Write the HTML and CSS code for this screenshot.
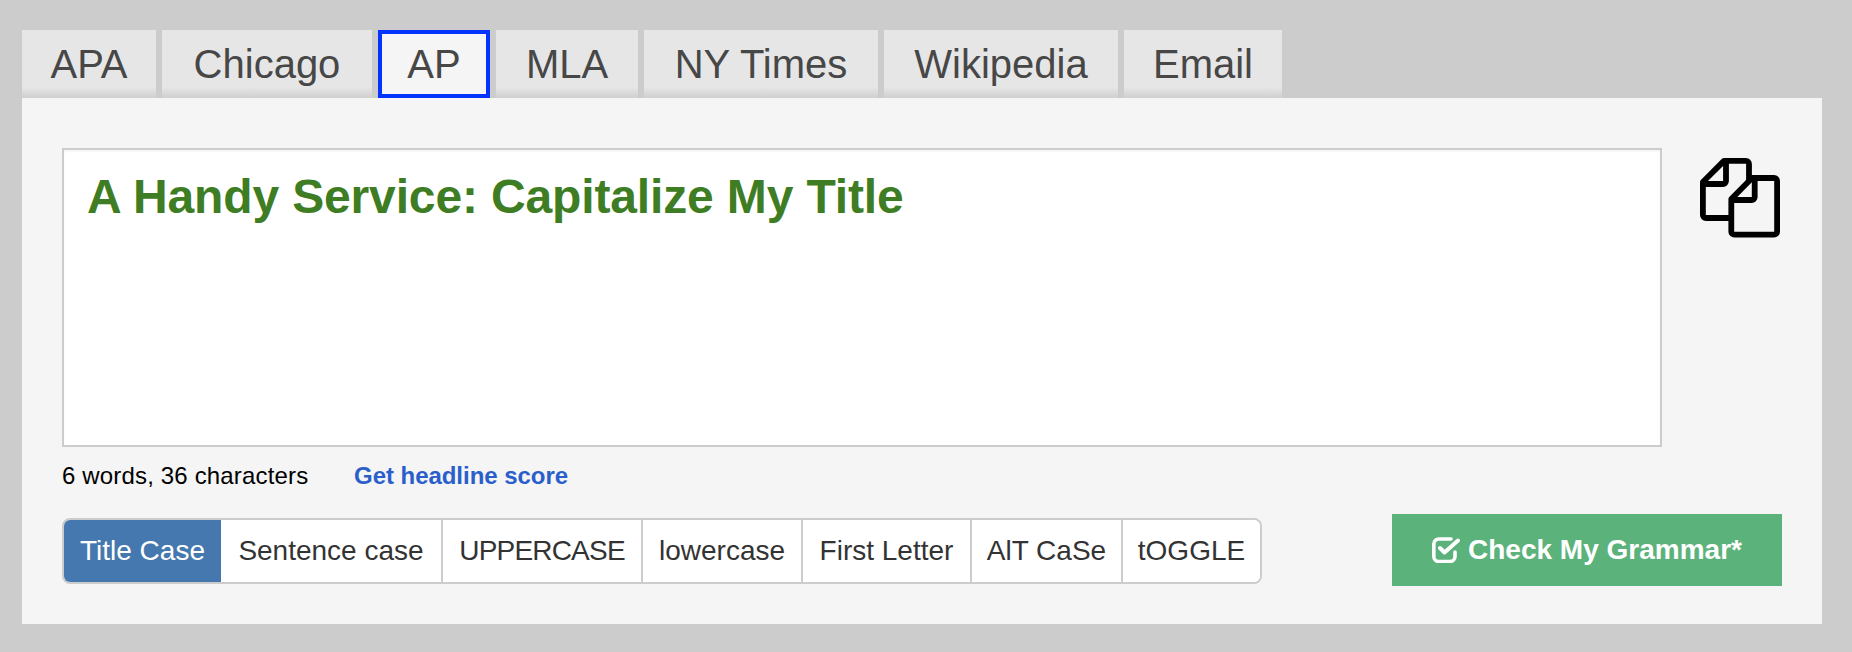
FILE: index.html
```html
<!DOCTYPE html>
<html lang="en">
<head>
<meta charset="utf-8">
<title>Capitalize My Title</title>
<link rel="stylesheet" href="styles.css">
</head>
<body>
<nav class="tabs">
  <a class="tab">APA</a>
  <a class="tab">Chicago</a>
  <a class="tab tab-active">AP</a>
  <a class="tab">MLA</a>
  <a class="tab">NY Times</a>
  <a class="tab">Wikipedia</a>
  <a class="tab">Email</a>
</nav>
<main class="panel">
  <div class="editor-row">
    <div class="title-box">A Handy Service: Capitalize My Title</div>
    <svg class="copy-icon" viewBox="0 0 80 80" fill="none" stroke="#000" stroke-width="5.8" stroke-linejoin="round" stroke-linecap="round">
      <path d="M24 2.900H46a3 3 0 0 1 3 3V60H5.900a3 3 0 0 1-3-3V24Z"/>
      <path d="M26 3V23a3 3 0 0 1-3 3H3"/>
      <path class="copy-front" d="M52 20H74.100a3 3 0 0 1 3 3V73.700a3 3 0 0 1-3 3H34.300a3 3 0 0 1-3-3V41Z"/>
      <path d="M54.700 20V39a3 3 0 0 1-3 3H32"/>
    </svg>
  </div>
  <div class="status">
    <span class="count">6 words, 36 characters</span>
    <a class="score-link">Get headline score</a>
  </div>
  <div class="actions">
    <div class="case-group">
      <button class="case-btn case-active">Title Case</button>
      <button class="case-btn">Sentence case</button>
      <button class="case-btn case-caps">UPPERCASE</button>
      <button class="case-btn">lowercase</button>
      <button class="case-btn">First Letter</button>
      <button class="case-btn">AlT CaSe</button>
      <button class="case-btn">tOGGLE</button>
    </div>
    <button class="grammar-btn">
      <svg class="check-icon" viewBox="0 0 28 26" fill="none" stroke="#fff" stroke-width="3.600" stroke-linecap="round" stroke-linejoin="round">
        <path d="M23 15V19.500a5 5 0 0 1-5 5H6.800a5 5 0 0 1-5-5V7a5 5 0 0 1 5-5H19"/>
        <path d="M8 11L12.500 15.500 26 3.500" stroke-width="4"/>
      </svg>
      <span>Check My Grammar*</span>
    </button>
  </div>
</main>
</body>
</html>
```

FILE: styles.css
```css
* {
  box-sizing: border-box;
}

html,
body {
  margin: 0;
  height: 652px;
  overflow: hidden;
}

body {
  background: #cccccc;
  padding: 30px 30px 0 22px;
  font-family: "Liberation Sans", Arial, sans-serif;
}

.tabs {
  display: grid;
  grid-template-columns: 134px 210px 112px 142px 234px 234px 158px;
  justify-content: start;
  gap: 6px;
  height: 68px;
}

.tab {
  background: linear-gradient(to bottom, #e6e6e6 0, #e6e6e6 84%, #cfcfcf 100%);
  color: #474747;
  font-size: 40px;
  line-height: 68px;
  text-align: center;
}

.tab-active {
  background: #f5f5f5;
  border: 4px solid #0433ff;
  line-height: 60px;
}

.panel {
  height: 526px;
  padding: 50px 40px 0;
  background: #f5f5f5;
}

.editor-row {
  display: flex;
  align-items: flex-start;
  gap: 38px;
}

.title-box {
  width: 1600px;
  height: 299px;
  padding: 20px 23px;
  background: #ffffff;
  border: 2px solid #cccccc;
  box-shadow: inset 0 2px 2px rgba(0, 0, 0, 0.04);
  color: #3e7d23;
  font-size: 48px;
  font-weight: 700;
  letter-spacing: -0.14px;
  line-height: 54px;
}

.copy-icon {
  width: 80px;
  height: 80px;
  margin-top: 10px;
}

.copy-front {
  fill: #f5f5f5;
}

.status {
  display: flex;
  height: 67px;
  padding-top: 15px;
  color: #000000;
  font-size: 24px;
  line-height: 28px;
}

.count {
  width: 292px;
  letter-spacing: 0.16px;
}

.score-link {
  color: #2a5fcb;
  font-weight: 700;
  letter-spacing: -0.04px;
}

.actions {
  display: flex;
  justify-content: space-between;
  align-items: flex-start;
}

.case-group {
  display: grid;
  grid-template-columns: 157px 220px 200px 160px 169px 151px 139px;
  width: 1200px;
  height: 66px;
  margin-top: 4px;
  background: #ffffff;
  border: 2px solid #cccccc;
  border-radius: 8px;
  overflow: hidden;
}

.case-btn {
  margin: 0;
  padding: 0;
  background: #ffffff;
  border: 0;
  border-left: 2px solid #cccccc;
  color: #333333;
  font-family: inherit;
  font-size: 28px;
}

.case-caps {
  letter-spacing: -0.8px;
}

.case-active,
.case-active + .case-btn {
  border-left: 0;
}

.case-active {
  background: #4578ae;
  color: #ffffff;
}

.grammar-btn {
  display: flex;
  justify-content: center;
  align-items: center;
  gap: 8px;
  width: 390px;
  height: 72px;
  padding: 0;
  background: #5cb27b;
  border: 0;
  color: #ffffff;
  font-family: inherit;
  font-size: 28px;
  font-weight: 700;
}

.check-icon {
  width: 28px;
  height: 26px;
}
```
